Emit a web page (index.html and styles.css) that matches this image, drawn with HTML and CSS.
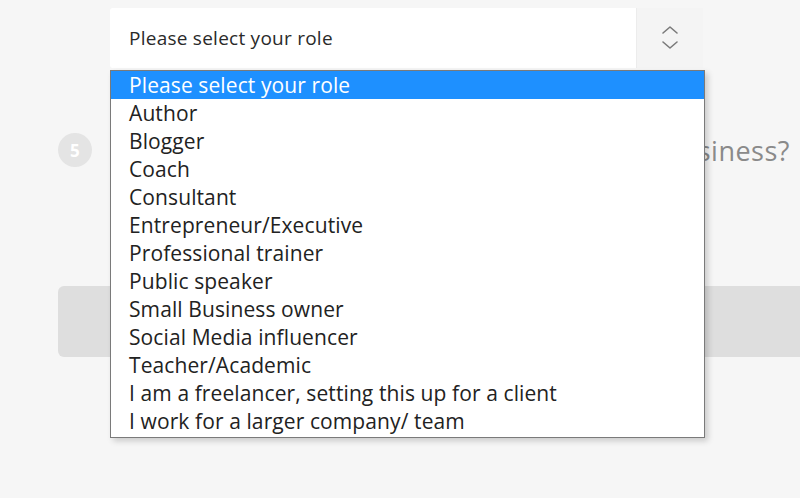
FILE: index.html
```html
<!DOCTYPE html>
<html>
<head>
<meta charset="utf-8">
<link rel="stylesheet" href="styles.css">
</head>
<body>
<div class="page">
  <div class="select">
    <div class="select-value">Please select your role</div>
    <div class="select-arrow">
      <svg width="18" height="26" viewBox="0 0 18 26"><path d="M2 8 L9 2 L16 8" fill="none" stroke="#7a7a7a" stroke-width="1.6" stroke-linecap="round" stroke-linejoin="round"/><path d="M2 17 L9 23 L16 17" fill="none" stroke="#7a7a7a" stroke-width="1.6" stroke-linecap="round" stroke-linejoin="round"/></svg>
    </div>
  </div>
  <div class="question">
    <div class="step">5</div>
    <div class="question-text">What is your role in your business?</div>
  </div>
  <div class="bar"></div>
</div>
<ul class="listbox">
  <li class="option selected">Please select your role</li>
  <li class="option">Author</li>
  <li class="option">Blogger</li>
  <li class="option">Coach</li>
  <li class="option">Consultant</li>
  <li class="option">Entrepreneur/Executive</li>
  <li class="option">Professional trainer</li>
  <li class="option">Public speaker</li>
  <li class="option">Small Business owner</li>
  <li class="option">Social Media influencer</li>
  <li class="option">Teacher/Academic</li>
  <li class="option">I am a freelancer, setting this up for a client</li>
  <li class="option">I work for a larger company/ team</li>
</ul>
</body>
</html>
```
FILE: styles.css
```css
html, body {
  margin: 0;
  padding: 0;
}
body {
  background: #f6f6f6;
  width: 800px;
  height: 498px;
  overflow: hidden;
  position: relative;
  font-family: "Open Sans", "Noto Sans", sans-serif;
}
.page {
  padding-top: 8px;
}
.select {
  margin-left: 110px;
  width: 593px;
  height: 60px;
  display: flex;
  background: #ffffff;
  box-sizing: border-box;
  border-radius: 3px;
}
.select-value {
  flex: 1;
  display: flex;
  align-items: center;
  padding-left: 19px;
  font-size: 19px;
  letter-spacing: 0.25px;
  color: #2a2a2a;
}
.select-arrow {
  width: 66px;
  background: #f4f4f4;
  border-left: 1px solid #ececec;
  display: flex;
  align-items: center;
  justify-content: center;
}
.question {
  display: flex;
  align-items: center;
  margin-top: 65px;
  padding-left: 58px;
  height: 34px;
}
.step {
  width: 34px;
  height: 34px;
  border-radius: 50%;
  background: #e4e4e4;
  color: #ffffff;
  font-weight: 700;
  font-size: 17px;
  display: flex;
  align-items: center;
  justify-content: center;
}
.question-text {
  margin-left: auto;
  width: 700px;
  text-align: right;
  padding-right: 10px;
  font-size: 27px;
  letter-spacing: 0.5px;
  color: #8a8a8a;
  white-space: nowrap;
}
.bar {
  margin-top: 119px;
  margin-left: 58px;
  height: 71px;
  background: #dedede;
  border-radius: 6px 0 0 6px;
}
.listbox {
  position: absolute;
  left: 110px;
  top: 70px;
  width: 593px;
  margin: 0;
  padding: 0 0 2px 0;
  list-style: none;
  background: #ffffff;
  border: 1px solid #7a7a7a;
  box-shadow: 3px 3px 6px rgba(0,0,0,0.18);
}
.option {
  height: 28px;
  line-height: 28px;
  padding-left: 18px;
  font-size: 21px;
  letter-spacing: 0.1px;
  color: #222222;
  white-space: nowrap;
}
.option.selected {
  background: #1e90ff;
  color: #ffffff;
}
```
